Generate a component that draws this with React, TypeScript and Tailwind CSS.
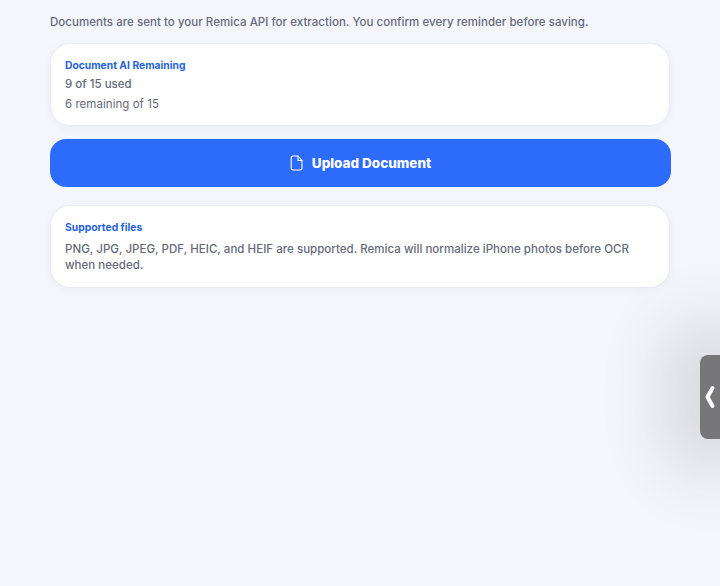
import React from 'react';

const InfoCard: React.FC<{ title: string; children: React.ReactNode }> = ({ title, children }) => (
    <div className="bg-white border border-[#e8ebf2] rounded-[20px] px-[14px] pt-[14px] pb-[11px] shadow-[0_2px_10px_rgba(30,50,100,0.04)]">
        <p className="text-[10.3px] leading-[14px] font-bold text-[#2563d9]">{title}</p>
        {children}
    </div>
);

const FileIcon = () => (
    <svg width="14" height="16" viewBox="0 0 14 16" fill="none" stroke="white" strokeWidth="1.1" strokeLinejoin="round" strokeLinecap="round">
        <path d="M3 1h5l4 4.5v7.7a1.8 1.8 0 0 1-1.8 1.8H3a1.8 1.8 0 0 1-1.8-1.8V2.8A1.8 1.8 0 0 1 3 1z" />
        <path d="M8 1v4.5h4" />
    </svg>
);

export default function App() {
    return (
        <div className="relative w-[720px] h-[586px] overflow-hidden bg-[#f5f6fb] font-['Inter',sans-serif] px-[50px] pt-[15px]">
            <p className="text-[11.5px] leading-[14px] font-medium tracking-[0.04px] text-[#666a7d]">
                Documents are sent to your Remica API for extraction. You confirm every reminder before saving.
            </p>

            <div className="mt-[14px]">
                <InfoCard title="Document AI Remaining">
                    <p className="mt-[2px] text-[11.5px] leading-[20px] font-medium text-[#666a7a]">9 of 15 used</p>
                    <p className="text-[11.5px] leading-[20px] tracking-[0.04px] text-[#666a7a]">6 remaining of 15</p>
                </InfoCard>
            </div>

            <button className="mt-[13px] w-[621px] h-[48px] rounded-[16px] bg-[#2d6bfb] flex items-center justify-center gap-[8px] text-white text-[13.5px] font-extrabold">
                <FileIcon />
                <span>Upload Document</span>
            </button>

            <div className="mt-[18px]">
                <InfoCard title="Supported files">
                    <p className="mt-[7px] mb-[3px] text-[11.5px] leading-[16px] font-medium tracking-[0.03px] text-[#666a7a]">
                        PNG, JPG, JPEG, PDF, HEIC, and HEIF are supported. Remica will normalize iPhone photos before OCR when needed.
                    </p>
                </InfoCard>
            </div>

            <div className="absolute right-0 top-[355px] w-[20px] h-[84px] rounded-l-[8px] bg-[#77777a] flex items-center justify-start pl-[4px] shadow-[0_0_70px_30px_rgba(40,40,50,0.16)]">
                <svg width="12" height="26" viewBox="0 0 12 26" fill="none" stroke="white" strokeWidth="4" strokeLinecap="round" strokeLinejoin="round">
                    <path d="M8.5 4 L3.5 13 L8.5 22" />
                </svg>
            </div>
        </div>
    );
}
